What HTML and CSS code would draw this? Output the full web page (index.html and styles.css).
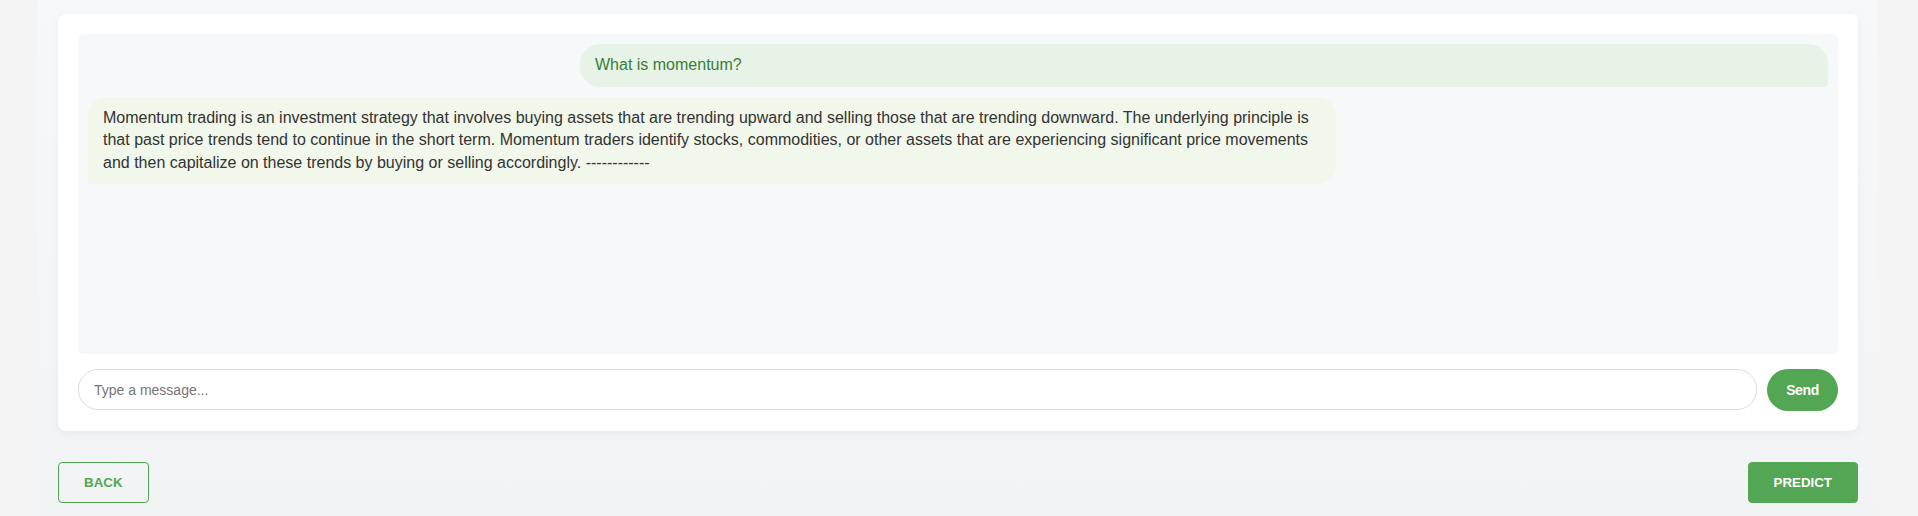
FILE: index.html
```html
<!DOCTYPE html>
<html lang="en">
<head>
<meta charset="utf-8">
<title>Chat</title>
<link rel="stylesheet" href="styles.css">
</head>
<body>
<div class="page">
  <div class="card">
    <div class="chat">
      <div class="msg user">What is momentum?</div>
      <div class="msg bot">Momentum trading is an investment strategy that involves buying assets that are trending upward and selling those that are trending downward. The underlying principle is that past price trends tend to continue in the short term. Momentum traders identify stocks, commodities, or other assets that are experiencing significant price movements and then capitalize on these trends by buying or selling accordingly. ------------</div>
    </div>
    <div class="composer">
      <input class="input" type="text" placeholder="Type a message...">
      <button class="send">Send</button>
    </div>
  </div>
  <div class="actions">
    <button class="btn back">BACK</button>
    <button class="btn predict">PREDICT</button>
  </div>
</div>
</body>
</html>
```
FILE: styles.css
```css
html, body {
  margin: 0;
  padding: 0;
  background: #f4f4f4;
  height: 100%;
  overflow: hidden;
}
.page {
  margin-left: 38px;
  width: 1840px;
  box-sizing: border-box;
  padding: 14px 20px 0 20px;
  min-height: 100%;
  background: linear-gradient(#f7f8fa, #f2f3f5);
}
.card {
  background: #fff;
  border-radius: 8px;
  padding: 20px;
  box-shadow: 0 2px 10px rgba(0, 0, 0, 0.05);
}
.chat {
  background: #f7f8fa;
  border-radius: 6px;
  height: 320px;
  box-sizing: border-box;
  padding: 10px;
  display: flex;
  flex-direction: column;
  gap: 10px;
}
.msg {
  width: 70%;
  padding: 10px 15px;
  font-family: "Liberation Sans", Arial, sans-serif;
  font-size: 16px;
  line-height: 22.5px;
}
.user {
  align-self: flex-end;
  background: #e8f3e7;
  color: #387d36;
  border-radius: 20px 20px 4px 20px;
}
.bot {
  align-self: flex-start;
  background: #f1f7ea;
  color: #333;
  border-radius: 20px 20px 20px 4px;
}
.composer {
  display: flex;
  gap: 10px;
  margin-top: 15px;
}
.input {
  flex: 1;
  height: 41px;
  box-sizing: border-box;
  border: 1px solid #ddd;
  border-radius: 20px;
  padding: 0 15px;
  font-family: "Liberation Sans", Arial, sans-serif;
  font-size: 14px;
  color: #333;
  outline: none;
}
.input::placeholder {
  color: #757575;
}
.send {
  height: 42px;
  width: 71px;
  padding: 0;
  border: none;
  border-radius: 21px;
  background: #53a653;
  color: #fff;
  font-family: "Liberation Sans", Arial, sans-serif;
  font-size: 14px;
  font-weight: bold;
  letter-spacing: -0.4px;
}
.actions {
  display: flex;
  justify-content: space-between;
  margin-top: 31px;
}
.btn {
  height: 41px;
  box-sizing: border-box;
  padding: 0 25px;
  border-radius: 4px;
  font-family: "Liberation Sans", Arial, sans-serif;
  font-size: 13.33px;
  font-weight: bold;
}
.back {
  background: transparent;
  border: 1px solid #53a653;
  color: #53a653;
}
.predict {
  background: #53a653;
  border: 1px solid #53a653;
  color: #fff;
}
```
